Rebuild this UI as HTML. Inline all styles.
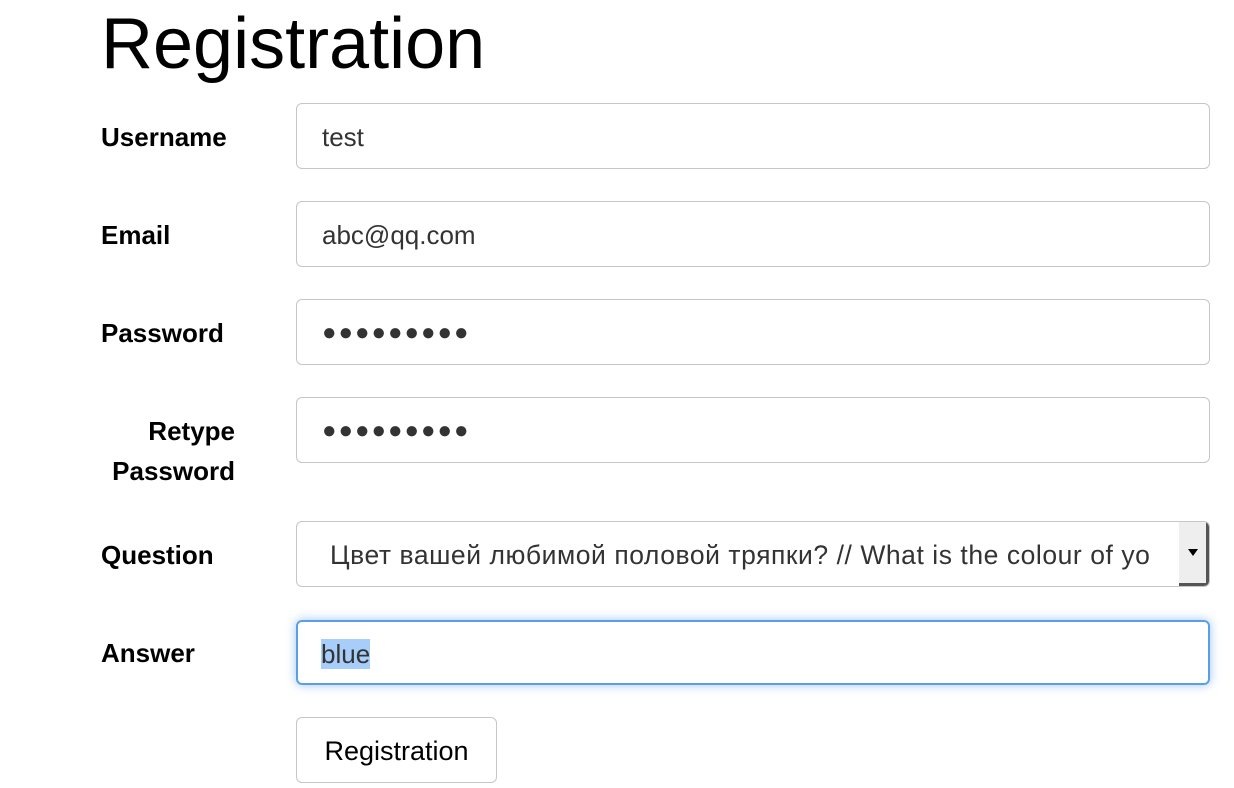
<!DOCTYPE html>
<html><head><meta charset="utf-8"><style>
body{margin:0;width:1234px;height:788px;background:#fff;font-family:"Liberation Sans",sans-serif;position:relative;overflow:hidden;color:#000}
.t{position:absolute;left:101px;top:-1px;font-size:72px;line-height:90px;color:#000}
.l{position:absolute;font-weight:bold;font-size:26px;line-height:40px}
.in{position:absolute;left:296px;height:63px;border:1px solid #c6c6c6;border-radius:6px;box-sizing:border-box;width:914px;font-size:26px;color:#333;line-height:66px;padding-left:25px;white-space:nowrap;overflow:hidden}
.dots{letter-spacing:2px;font-size:24px}
</style></head><body>
<div class="t">Registration</div>
<div class="l" style="left:101px;top:117px">Username</div>
<div class="l" style="left:101px;top:215px">Email</div>
<div class="l" style="left:101px;top:313px">Password</div>
<div class="l" style="left:101px;top:411px;width:134px;text-align:right;line-height:40px">Retype<br>Password</div>
<div class="l" style="left:101px;top:535px">Question</div>
<div class="l" style="left:101px;top:633px">Answer</div>
<div class="in" style="top:103px;height:66px">test</div>
<div class="in" style="top:201px;height:66px">abc@qq.com</div>
<div class="in dots" style="top:299px;height:66px">●●●●●●●●●</div>
<div class="in dots" style="top:397px;height:66px">●●●●●●●●●</div>
<div class="in" style="top:521px;height:66px;padding-left:33px;padding-right:40px;font-size:26.5px;letter-spacing:0.55px">Цвет вашей любимой половой тряпки? // What is the colour of yo
<div style="position:absolute;right:0;top:0;width:30px;height:64px;background:#eee;border-right:3px solid #555;border-bottom:3px solid #555;box-sizing:border-box"><div style="position:absolute;left:9px;top:27px;border-left:5px solid transparent;border-right:5px solid transparent;border-top:7px solid #000"></div></div></div>
<div class="in" style="top:620px;height:65px;border:2px solid #5b9ee6;box-shadow:0 0 10px rgba(91,158,230,.6);padding-left:23px;line-height:64px"><span style="background:#a7cdfb">blue</span></div>
<div style="position:absolute;left:296px;top:717px;width:201px;height:66px;border:1px solid #c6c6c6;border-radius:6px;box-sizing:border-box;font-size:27px;line-height:66px;text-align:center">Registration</div>
</body></html>
